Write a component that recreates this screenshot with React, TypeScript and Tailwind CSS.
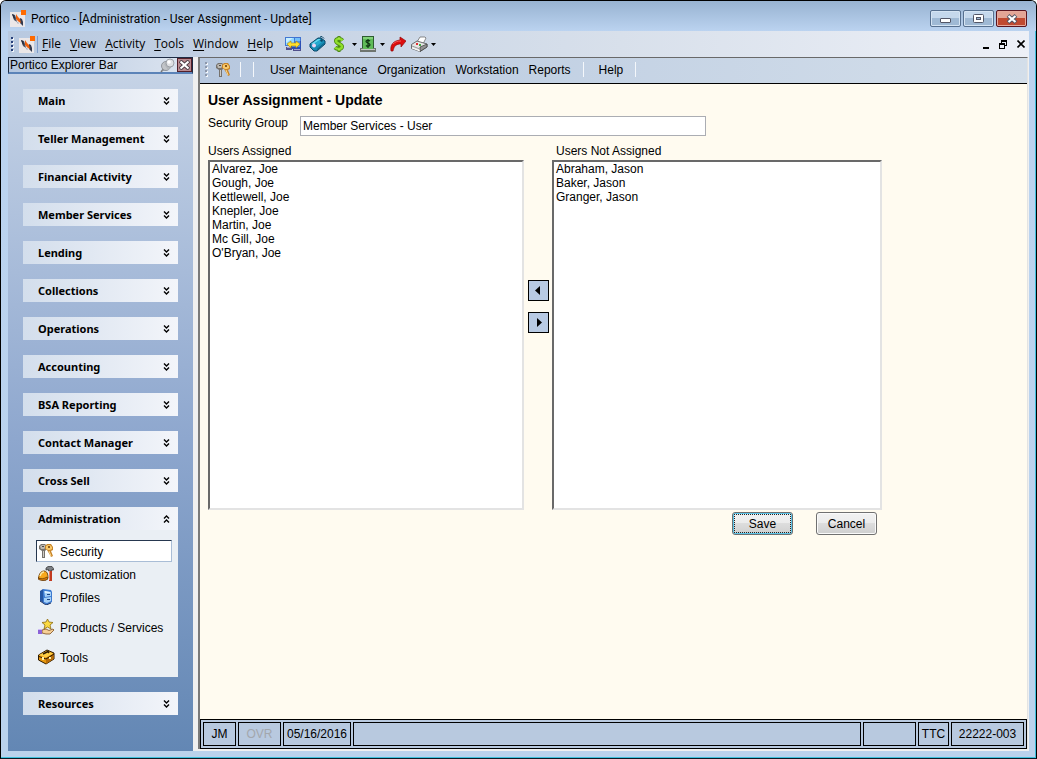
import React from "react";

const PorticoLogo = () => (
  <svg width="17" height="17" viewBox="0 0 17 17" aria-hidden="true">
    <rect x="0" y="2" width="15" height="15" fill="#ebe7e8" />
    <path d="M2 4l3 1 1 3 1 4-3-2z" fill="#4a5266" />
    <path d="M2 4l2 1 1 3-1 1z" fill="#252b3b" />
    <path d="M10 8l2 1 1 3v4l-3-3z" fill="#343b4f" />
    <path d="M6 4l2 3 2 2 1 4-2-1-3-3z" fill="#f2600c" />
    <path d="M6 11l3 2-1 1z" fill="#a5abba" />
    <rect x="11" y="0" width="5" height="5" fill="#ff6a00" />
  </svg>
);

const KeysIcon = () => (
  <svg width="16" height="16" viewBox="0 0 16 16" aria-hidden="true">
    <path d="M1 3l2-2h4l2 2v3L7 8v7H4V8L1 6z" fill="#76726d" />
    <path d="M2 3l2-1h3l1 2-2 2H3z" fill="#bdb9b2" />
    <path d="M5 8h1v6H5z" fill="#cfccc6" />
    <path d="M7 3l2-2h4l2 3v3l-2 1 2 5-2 1-1-2-3-5-2-1z" fill="#c88427" />
    <path d="M8 3l2-1h2l2 2v2l-2 1h-2L8 6z" fill="#f8c869" />
    <path d="M11 8l2 5" stroke="#ffd98c" fill="none" />
    <path d="M10 3h2v2h-2z" fill="#8a5a1c" />
    <path d="M4 3h2v1H4z" fill="#4c4945" />
  </svg>
);

const NetworkIcon = () => (
  <svg width="17" height="16" viewBox="0 0 17 16" aria-hidden="true">
    <path d="M6 4h10v9H6z" fill="#2c4fb4" />
    <path d="M7 5h8v6H7z" fill="#4c90ea" />
    <path d="M0 1h10v9H0z" fill="#4278d2" />
    <path d="M1 2h8v7H1z" fill="#8fd8ff" />
    <path d="M1 2h7L1 7z" fill="#c9f0ff" />
    <path d="M10 1h6v4h-6z" fill="#3f72d2" />
    <path d="M10 2h5v3h-5z" fill="#74c0fa" />
    <path d="M1 11h6v3H1zM8 13h8v2H8z" fill="#50508c" />
    <path d="M2 11h4v1H2zM9 13h6v1H9z" fill="#a5a4cc" />
    <path d="M2 8l4-3v2h5V5l4 3-4 4v-2H6v2z" fill="#ffe12e" stroke="#a88310" strokeWidth="0.600" />
  </svg>
);

const TagIcon = () => (
  <svg width="17" height="16" viewBox="0 0 17 16" aria-hidden="true">
    <path d="M1 8l8-6h3l4 3v3l-8 7H5l-4-4z" fill="#178bb4" stroke="#0a4566" />
    <path d="M2 8l7-5h3l-7 5z" fill="#62d8ee" />
    <path d="M8 13l7-6v1l-7 6z" fill="#0d5c80" />
    <path d="M6 7l5-3 2 2-5 4z" fill="#26a9cf" />
    <circle cx="5" cy="9.500" r="2" fill="#ead4f4" />
    <circle cx="12.500" cy="4.500" r="1.200" fill="#0a4566" />
    <path d="M11 1l2-.5 2 2" stroke="#0a4566" fill="none" />
  </svg>
);

const DollarIcon = () => (
  <svg width="12" height="16" viewBox="0 0 12 16" aria-hidden="true">
    <path d="M6 0v16" stroke="#4c8a14" strokeWidth="3" />
    <path d="M9.500 4.500C8 2.500 3 2 3 5s6 2.500 6 5.500-5 3-7 1" fill="none" stroke="#4c8a14" strokeWidth="4" />
    <path d="M9.500 4.500C8 2.500 3 2 3 5s6 2.500 6 5.500-5 3-7 1" fill="none" stroke="#8fdf2a" strokeWidth="2.400" />
    <path d="M6 1v2M6 13v2" stroke="#b5ee55" />
  </svg>
);

const CashDrawerIcon = () => (
  <svg width="17" height="16" viewBox="0 0 17 16" aria-hidden="true">
    <rect x="2.500" y="0.500" width="11" height="13" fill="#5fbb58" stroke="#2e5c31" />
    <path d="M3 1h10v2H3z" fill="#82d279" />
    <path d="M10 5C9 4 6 4 6 5.500S10 7 10 8.800 7 10.500 6 9.500M8 3v9" fill="none" stroke="#0d3311" strokeWidth="1.200" />
    <path d="M0 12h3v1h10v-1h3v4H0z" fill="#6f756f" />
    <path d="M1 13h14v1H1z" fill="#c3c7c3" />
  </svg>
);

const RedArrowIcon = () => (
  <svg width="16" height="16" viewBox="0 0 16 16" aria-hidden="true">
    <path d="M1 15C0 9 3 5 10 4V1l6 4-5 6V8C6 8 4 10 3 15z" fill="#dd0d0d" stroke="#930606" strokeWidth="0.700" />
    <path d="M3 8c2-2 4-3 8-3" stroke="#f25a5a" fill="none" />
  </svg>
);

const PrinterIcon = () => (
  <svg width="17" height="16" viewBox="0 0 17 16" aria-hidden="true">
    <path d="M6 6l3-5h5l1 1-3 6z" fill="#fff" stroke="#6f6f6f" strokeWidth="0.800" />
    <path d="M0.500 8.500L6 5l10 3v3l-7 4.500-8.500-3z" fill="#e6e6e6" stroke="#4c4c4c" strokeWidth="0.800" />
    <path d="M9 11l7-3v3l-7 4.500z" fill="#929292" stroke="#3a3a3a" strokeWidth="0.700" />
    <path d="M1 10l8 3" stroke="#9a9a9a" />
    <path d="M1 12l8 3" stroke="#fff" />
    <path d="M5 7h2v2H5z" fill="#e23030" />
    <path d="M8 8h2v2H8z" fill="#45a945" />
  </svg>
);

const HelmetIcon = () => (
  <svg width="16" height="16" viewBox="0 0 16 16" aria-hidden="true">
    <path d="M0.500 12C1 8 3 5 6 5c3 0 4 3 4 7l-2 2H4z" fill="#f7a81c" stroke="#6b3c05" strokeWidth="0.900" />
    <path d="M2 10c1-3 2-4 4-4" stroke="#ffe9a0" strokeWidth="1.500" fill="none" />
    <path d="M0 12c3 1 6 1 9-1l1 2c-3 2-7 2-10 0z" fill="#d67c0c" stroke="#4d2a03" strokeWidth="0.600" />
    <path d="M8 2l2-1.500h4l1.500 2V4L14 3.500V5h-3.500V3.500L8 4z" fill="#7c8085" stroke="#2e2e2e" strokeWidth="0.700" />
    <path d="M11 5h3v10h-3z" fill="#c23a20" />
    <path d="M11 5h1v9h-1z" fill="#f08468" />
  </svg>
);

const ProfilesIcon = () => (
  <svg width="16" height="16" viewBox="0 0 16 16" aria-hidden="true">
    <path d="M2 2l3-2 1 1v13l-4-2z" fill="#2456a4" />
    <path d="M5 0l8 1 1 2v10l-5 3-4-2z" fill="#3c7ad0" />
    <path d="M6 2l7 1v4L7 8zM6 9l7-1v4l-4 2-3-1z" fill="#a6d0f7" />
    <path d="M7 2l5 1v1L7 4z" fill="#e0f2ff" />
    <path d="M9 5h3v1H9zM9 10h3v1H9z" fill="#1d4585" />
    <path d="M2 12l6 4 5-2" stroke="#1d3566" fill="none" />
  </svg>
);

const ProductsIcon = () => (
  <svg width="17" height="16" viewBox="0 0 17 16" aria-hidden="true">
    <path d="M9.500 0l1.500 3 4 .5-3 2.500 1 4-3.500-2L6 10l1-4-3-2.500L8 3z" fill="#fbda42" stroke="#8d6b10" strokeWidth="0.800" />
    <path d="M4 11l4-1 3 1.500 4-1.500 1 1-4 4H8l-4-1z" fill="#f6cf96" stroke="#7d4d1e" strokeWidth="0.800" />
    <path d="M0 10h4v5H0z" fill="#8b62d8" />
    <path d="M0 10h4v1H0z" fill="#cdbcf5" />
  </svg>
);

const ToolboxIcon = () => (
  <svg width="17" height="16" viewBox="0 0 17 16" aria-hidden="true">
    <path d="M0.500 6L9 1l7 3v6l-8 5-7.500-4z" fill="#e8990f" stroke="#2e1b02" />
    <path d="M1 6l8-4 6 2.500L8 8.500z" fill="#ffcf45" />
    <path d="M8 9v6l7.500-5V5z" fill="#b96d08" />
    <path d="M1 7.500L8 10l8-5" stroke="#2e1b02" fill="none" />
    <path d="M5 5l5-2.500 1 1.500" stroke="#2e1b02" strokeWidth="1.500" fill="none" />
    <path d="M4 8h2v3H4zM11 8h2v2h-2z" fill="#fff1a8" />
  </svg>
);

const PinIcon = () => (
  <svg width="15" height="15" viewBox="0 0 15 15" aria-hidden="true">
    <path d="M1 14l4-5" stroke="#777" strokeWidth="1.500" />
    <path d="M2 13l2-4 4 3z" fill="#8f9398" />
    <circle cx="6" cy="8" r="4.500" fill="#c2c5c9" stroke="#84888e" strokeWidth="0.800" />
    <path d="M4 6l5-4 4 6-5 4z" fill="#b3b7bb" />
    <circle cx="10" cy="5" r="4" fill="#dfe1e4" stroke="#8f949a" strokeWidth="0.800" />
    <circle cx="9" cy="4" r="1.800" fill="#fff" />
  </svg>
);

const Chevrons = ({ up = false }: { up?: boolean }) => (
  <svg
    width="7"
    height="8"
    viewBox="0 0 7 8"
    className={up ? "rotate-180" : ""}
    aria-hidden="true"
  >
    <path d="M1 .5l2.500 2.500L6 .5M1 4.500L3.500 7 6 4.500" fill="none" stroke="#000" strokeWidth="1.400" />
  </svg>
);

const Caret = () => (
  <svg width="5" height="3" viewBox="0 0 5 3" aria-hidden="true">
    <path d="M0 0h5L2.500 3z" fill="#000" />
  </svg>
);

const Grip = ({ light = false }: { light?: boolean }) => (
  <svg width="3" height="15" viewBox="0 0 3 15" aria-hidden="true">
    {[0, 4, 8, 12].map((y) => (
      <g key={y}>
        <rect x="1" y={y + 1} width="2" height="2" fill="#f4f7fb" />
        <rect x="0" y={y} width="2" height="2" fill={light ? "#8d98ab" : "#27407a"} />
      </g>
    ))}
  </svg>
);

const menus = ["File", "View", "Activity", "Tools", "Window", "Help"];

const sections = [
  "Main",
  "Teller Management",
  "Financial Activity",
  "Member Services",
  "Lending",
  "Collections",
  "Operations",
  "Accounting",
  "BSA Reporting",
  "Contact Manager",
  "Cross Sell",
];

const adminItems = [
  { label: "Security", icon: <KeysIcon />, className: "border border-[#a9bdd6] border-t-[#26374f] border-l-[#26374f] bg-white" },
  { label: "Customization", icon: <HelmetIcon />, className: "mt-px border border-transparent" },
  { label: "Profiles", icon: <ProfilesIcon />, className: "mt-px border border-transparent" },
  { label: "Products / Services", icon: <ProductsIcon />, className: "mt-2 border border-transparent" },
  { label: "Tools", icon: <ToolboxIcon />, className: "mt-2 border border-transparent" },
];

const assigned = [
  "Alvarez, Joe",
  "Gough, Joe",
  "Kettlewell, Joe",
  "Knepler, Joe",
  "Martin, Joe",
  "Mc Gill, Joe",
  "O'Bryan, Joe",
];

const notAssigned = ["Abraham, Jason", "Baker, Jason", "Granger, Jason"];

const captionClass =
  "flex h-[17px] w-[31px] items-center justify-center rounded-[2px] border border-[#57708f] bg-linear-to-b from-[#c5d8ec] from-50% to-[#9fb9d4] to-50% shadow-[inset_0_0_0_1px_#d5e4f3]";

const TitleBar = () => (
  <header className="flex h-[30px] items-start bg-linear-to-b from-[#98b3d1] to-[#bbd3f0] pr-[9px] pl-[9px]">
    <div className="flex h-[34px] items-center gap-1">
      <PorticoLogo />
      <h1 className="pt-px font-['Roboto',sans-serif] text-[12px] leading-4">
        Portico - [Administration - User Assignment - Update]
      </h1>
    </div>
    <div className="mt-[9px] ml-auto flex gap-[2px]">
      <button aria-label="Minimize" className={captionClass}>
        <span className="mt-1 h-[5px] w-[11px] rounded-[1px] border border-[#535666] bg-white" />
      </button>
      <button aria-label="Restore" className={captionClass}>
        <svg width="11" height="9" viewBox="0 0 11 9" aria-hidden="true">
          <rect x="0.500" y="0.500" width="10" height="8" rx="1" fill="#fff" stroke="#535666" />
          <rect x="3.500" y="3.500" width="4" height="2" fill="#9fb9d4" stroke="#535666" />
        </svg>
      </button>
      <button
        aria-label="Close"
        className="flex h-[17px] w-[31px] items-center justify-center rounded-[2px] border border-[#5a1520] bg-linear-to-b from-[#e3a596] from-50% to-[#c04a31] to-50% shadow-[inset_0_0_0_1px_#e6a99c]"
      >
        <svg width="12" height="10" viewBox="0 0 12 10" aria-hidden="true">
          <path d="M2 1.500l8 7M10 1.500l-8 7" stroke="#535666" strokeWidth="4" />
          <path d="M2.500 2l7 6M9.500 2l-7 6" stroke="#fff" strokeWidth="2.200" />
        </svg>
      </button>
    </div>
  </header>
);

const MenuBar = () => (
  <div className="mx-[7px] flex h-[26px] items-center bg-linear-to-r from-[#b8c9e0] via-[#d8e0eb] via-60% to-[#edf0f7] pl-[3px] pr-1">
    <Grip />
    <span className="ml-[5px] flex border-r border-[#7f9dcc] pr-px">
      <PorticoLogo />
    </span>
    <nav className="ml-1 flex gap-[9px] font-['Open_Sans',sans-serif] text-[12px] leading-4">
      {menus.map((menu) => (
        <button key={menu}>
          <span className="underline underline-offset-2">{menu[0]}</span>
          {menu.slice(1)}
        </button>
      ))}
    </nav>
    <div className="ml-3 flex items-center">
      <button aria-label="Network"><NetworkIcon /></button>
      <button aria-label="Tag" className="ml-[7px]"><TagIcon /></button>
      <button aria-label="Money" className="ml-[7px] flex items-center gap-[7px]"><DollarIcon /><Caret /></button>
      <button aria-label="Cash drawer" className="ml-[3px] flex items-center gap-[3px]"><CashDrawerIcon /><Caret /></button>
      <button aria-label="Send" className="ml-[5px]"><RedArrowIcon /></button>
      <button aria-label="Print" className="ml-[5px] flex items-center gap-[3px]"><PrinterIcon /><Caret /></button>
    </div>
    <div className="ml-auto flex items-center gap-[9px]">
      <button aria-label="Minimize document">
        <svg width="7" height="9" viewBox="0 0 7 9" aria-hidden="true">
          <path d="M0 7h6v2H0z" fill="#000" />
        </svg>
      </button>
      <button aria-label="Restore document">
        <svg width="9" height="9" viewBox="0 0 9 9" aria-hidden="true">
          <path d="M2 0h6v6H6V5h1V2H3v1H2zM0 3h6v6H0zM1 5v3h4V5z" fill="#000" fillRule="evenodd" />
        </svg>
      </button>
      <button aria-label="Close document">
        <svg width="8" height="8" viewBox="0 0 8 8" aria-hidden="true">
          <path d="M.5 .5l7 7M7.500 .5l-7 7" stroke="#000" strokeWidth="1.600" />
        </svg>
      </button>
    </div>
  </div>
);

const sectionClass =
  "flex h-[23px] w-full items-center justify-between bg-linear-to-r from-[#d3deec] to-[#f3f5fa] pr-2 pl-[15px] text-left font-['Noto_Sans',sans-serif] text-[11px] font-bold";

const Sidebar = () => (
  <aside className="flex w-[185px] shrink-0 flex-col bg-linear-to-b from-[#c8d5e7] via-[#8ea7ce] via-55% to-[#6387b4]">
    <div className="flex h-[17px] items-center border border-b-2 border-[#1e2c44] border-b-[#5b83b8] bg-linear-to-r from-[#b4c6df] to-[#dde5f0] pl-px">
      <h2 className="leading-[14px]">Portico Explorer Bar</h2>
      <button aria-label="Pin" className="ml-auto"><PinIcon /></button>
      <button
        aria-label="Close explorer bar"
        className="ml-[2px] flex h-[14px] w-[15px] items-center justify-center border border-[#54202a] bg-[#b98a90]"
      >
        <svg width="11" height="10" viewBox="0 0 11 10" aria-hidden="true">
          <path d="M1 1l9 8M10 1L1 9" stroke="#4b3d45" strokeWidth="4" />
          <path d="M1.500 1.500l8 7M9.500 1.500l-8 7" stroke="#fff" strokeWidth="2.200" />
        </svg>
      </button>
    </div>
    <div className="flex flex-col gap-[15px] px-[15px] pt-[15px]">
      {sections.map((section) => (
        <button key={section} className={sectionClass}>
          <span className="pt-px">{section}</span>
          <Chevrons />
        </button>
      ))}
      <div>
        <button className={sectionClass} aria-expanded="true">
          <span className="pt-px">Administration</span>
          <Chevrons up />
        </button>
        <div className="flex flex-col bg-[#eaeff4] pt-[10px] pr-[6px] pb-[9px] pl-[13px]">
          {adminItems.map((item) => (
            <a
              key={item.label}
              href="#"
              className={`flex h-[22px] items-center gap-[5px] pl-px ${item.className}`}
            >
              <span className="flex w-[17px]">{item.icon}</span>
              <span className="pt-px">{item.label}</span>
            </a>
          ))}
        </div>
      </div>
      <button className={sectionClass}>
        <span className="pt-px">Resources</span>
        <Chevrons />
      </button>
    </div>
  </aside>
);

const Toolbar = () => (
  <nav className="flex h-[26px] items-center border-b border-black bg-linear-to-r from-[#b7c8df] to-[#d3deea] pb-[2px] pl-[5px]">
    <Grip light />
    <button aria-label="Security" className="ml-[7px]"><KeysIcon /></button>
    <span className="ml-[9px] h-[15px] w-px bg-[#f4f7fb]" />
    <span className="ml-3 h-[15px] w-px bg-[#f4f7fb]" />
    <div className="ml-4 flex gap-[10px]">
      <button>User Maintenance</button>
      <button>Organization</button>
      <button>Workstation</button>
      <button>Reports</button>
    </div>
    <span className="ml-3 h-[15px] w-px bg-[#f4f7fb]" />
    <button className="ml-[15px]">Help</button>
    <span className="ml-3 h-[15px] w-px bg-[#f4f7fb]" />
  </nav>
);

const listClass =
  "h-[350px] overflow-hidden border-2 border-[#e3e3e3] border-t-[#696969] border-l-[#696969] bg-white text-[12px] outline-none";

const UserList = ({ id, users, width }: { id: string; users: string[]; width: string }) => (
  <select id={id} multiple className={`${listClass} ${width}`}>
    {users.map((user) => (
      <option key={user} className="h-[14px] min-h-0 px-[2px] py-0 leading-[14px]">
        {user}
      </option>
    ))}
  </select>
);

const arrowClass =
  "flex h-[21px] w-[21px] items-center justify-center border border-black bg-[#b8cae3]";

const buttonClass =
  "h-[23px] w-[61px] rounded-[3px] border border-[#707070] bg-[linear-gradient(#f2f2f2,#ebebeb_50%,#dddddd_50%,#cfcfcf)]";

const AssignmentForm = () => (
  <main className="flex-1 px-2 pt-2">
    <h2 className="text-[14px] leading-4 font-bold">User Assignment - Update</h2>
    <div className="mt-2 flex items-start">
      <label htmlFor="group" className="w-[92px] leading-[14px]">Security Group</label>
      <input
        id="group"
        defaultValue="Member Services - User"
        className="h-5 w-[406px] border border-[#abadb3] bg-white px-[2px] outline-none"
      />
    </div>
    <div className="mt-2 flex">
      <div className="flex flex-col">
        <label htmlFor="assigned" className="h-4 leading-[14px]">Users Assigned</label>
        <UserList id="assigned" users={assigned} width="w-[316px]" />
      </div>
      <div className="mt-[136px] ml-1 flex flex-col gap-[11px]">
        <button aria-label="Assign" className={arrowClass}>
          <svg width="7" height="9" viewBox="0 0 7 9" aria-hidden="true">
            <path d="M5 0v9L0 4.500z" fill="#000" />
          </svg>
        </button>
        <button aria-label="Unassign" className={arrowClass}>
          <svg width="7" height="9" viewBox="0 0 7 9" aria-hidden="true">
            <path d="M2 0v9l5-4.500z" fill="#000" />
          </svg>
        </button>
      </div>
      <div className="ml-[3px] flex flex-col">
        <label htmlFor="unassigned" className="h-4 pl-1 leading-[14px]">Users Not Assigned</label>
        <UserList id="unassigned" users={notAssigned} width="w-[330px]" />
        <div className="mt-[2px] flex justify-end gap-[23px] pr-[5px]">
          <button className={`${buttonClass} shadow-[inset_0_0_0_1px_#5cc5ea]`}>
            <span className="mx-px flex h-[19px] items-center justify-center border border-dotted border-[#222]">
              Save
            </span>
          </button>
          <button className={`${buttonClass} shadow-[inset_0_0_0_1px_#fafafa]`}>Cancel</button>
        </div>
      </div>
    </div>
  </main>
);

const StatusBar = () => (
  <footer className="flex h-[30px] gap-[2px] border border-black bg-[#b8c9df] p-[2px] text-center leading-[22px]">
    <span className="w-[33px] border border-black">JM</span>
    <span className="w-[43px] border border-black text-[#a3a7ad]">OVR</span>
    <span className="w-[68px] border border-black">05/16/2016</span>
    <span className="flex-1 border border-black" />
    <span className="w-[53px] border border-black" />
    <span className="w-[31px] border border-black">TTC</span>
    <span className="w-[73px] border border-black">22222-003</span>
  </footer>
);

const App = () => {
  return (
    <div className="flex min-h-screen flex-col overflow-hidden rounded-t-[6px] border border-black border-b-[#0b1a26] bg-linear-to-b from-[#bbd3f0] to-[#bad2ec] font-['Liberation_Sans',Arial,sans-serif] text-[12px] text-black shadow-[inset_-1px_-1px_0_#3fc0dc]">
      <TitleBar />
      <MenuBar />
      <div className="mx-[7px] mb-[7px] flex flex-1 bg-[#f0f0f0]">
        <Sidebar />
        <div className="mr-px mb-[2px] ml-[5px] flex min-w-0 flex-1 flex-col border-t border-r border-l-2 border-t-[#696969] border-r-[#e3e3e3] border-l-[#7a7a7a] bg-[#fffbf0]">
          <Toolbar />
          <AssignmentForm />
          <StatusBar />
        </div>
      </div>
    </div>
  );
};

export default App;
